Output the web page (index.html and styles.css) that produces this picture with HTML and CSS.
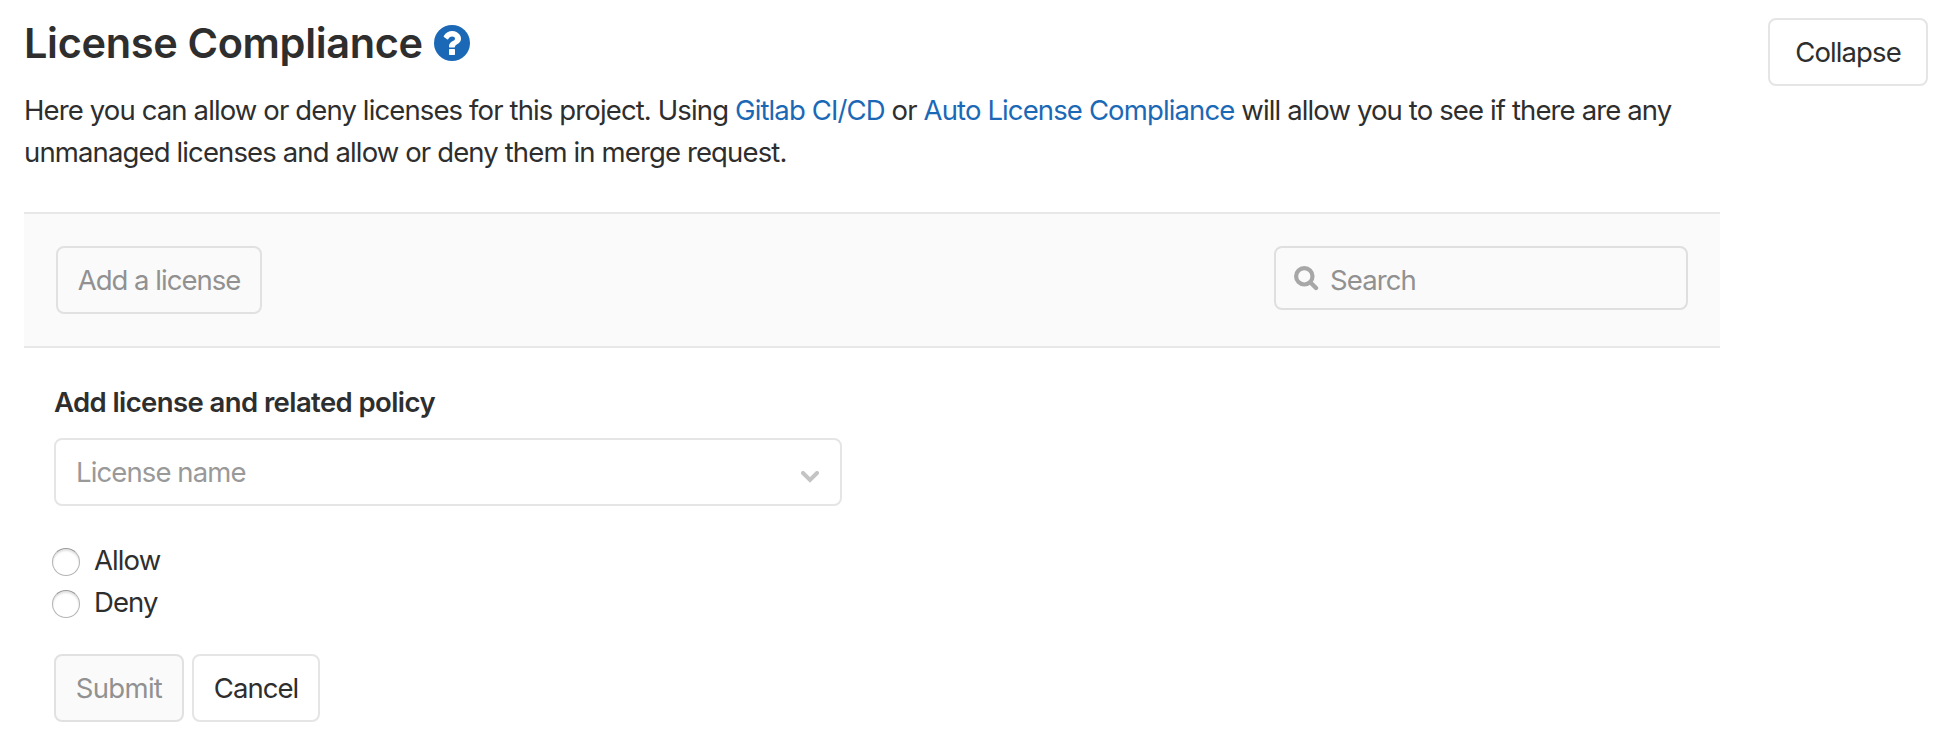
FILE: index.html
```html
<!DOCTYPE html>
<html lang="en">
<head>
<meta charset="utf-8">
<title>License Compliance</title>
<link rel="stylesheet" href="styles.css">
</head>
<body>
<section class="settings">
  <div class="main">
    <h4 class="title"><span class="title-text">License Compliance</span>
      <svg class="help" viewBox="128 128 1536 1536" aria-hidden="true"><circle cx="896" cy="896" r="768" fill="#1b69b6"/><path fill="#fff" d="M1024 1376v-192q0-14-9-23t-23-9h-192q-14 0-23 9t-9 23v192q0 14 9 23t23 9h192q14 0 23-9t9-23zm256-672q0-88-55.5-163t-138.5-116-170.500-41q-243 0-371 213-15 24 8 42l132 100q7 6 19 6 16 0 25-12 53-68 86-92 34-24 86-24 48 0 85.500 26t37.500 59q0 38-20 61t-68 45q-63 28-115.500 86.500t-52.500 125.500v36q0 14 9 23t23 9h192q14 0 23-9t9-23q0-19 21.500-49.500t54.500-49.500q32-18 49-28.500t46-35 44.500-48 28-60.500 12.500-81z"/></svg>
    </h4>
    <p class="intro"><span class="line1">Here you can allow or deny licenses for this project. Using <a class="link">Gitlab CI/CD</a> or <a class="link">Auto License Compliance</a> will allow you to see if there are any</span> <span class="line2">unmanaged licenses and allow or deny them in merge request.</span></p>
    <div class="toolbar">
      <button class="btn btn-add" disabled>Add a license</button>
      <div class="search">
        <svg class="search-icon" viewBox="0 0 26 26" aria-hidden="true"><circle cx="10.300" cy="11.300" r="8.200" fill="none" stroke="#a7a7a7" stroke-width="4.200"/><path d="M16.500 17.500L22 23" stroke="#a7a7a7" stroke-width="4.400" stroke-linecap="round"/></svg>
        <span class="search-text">Search</span>
      </div>
    </div>
    <form class="form">
      <div class="label">Add license and related policy</div>
      <div class="select"><span class="select-text">License name</span>
        <svg class="chevron" viewBox="0 0 18 12" aria-hidden="true"><path d="M2 2L9 9L16 2" fill="none" stroke="#c4c4c4" stroke-width="4" stroke-linecap="round"/></svg>
      </div>
      <div class="radios">
        <label class="option"><span class="radio"></span><span class="option-text">Allow</span></label>
        <label class="option"><span class="radio"></span><span class="option-text">Deny</span></label>
      </div>
      <div class="actions">
        <button type="button" class="btn btn-submit" disabled>Submit</button>
        <button type="button" class="btn btn-cancel">Cancel</button>
      </div>
    </form>
  </div>
  <button class="btn btn-collapse">Collapse</button>
</section>
</body>
</html>
```
FILE: styles.css
```css
* { box-sizing: border-box; }
body {
  margin: 0;
  background: #fff;
  color: #2e2e2e;
  font: 400 27.5px/42px Inter, "Liberation Sans", sans-serif;
  letter-spacing: -0.89px;
}
.settings {
  display: flex;
  justify-content: space-between;
  align-items: flex-start;
  padding: 18px 26px 0 24px;
}
.main { width: 1696px; }
.title {
  display: flex;
  align-items: center;
  gap: 11px;
  height: 50px;
  margin: 0 0 21px;
  font-size: 41.5px;
  font-weight: 630;
  letter-spacing: -0.35px;
}
.title-text { width: 399px; white-space: nowrap; }
.help { width: 36px; height: 36px; }
.intro { margin: 0; white-space: nowrap; letter-spacing: -0.873px; }
.line1, .line2 { display: block; width: max-content; }
.link { color: #1b69b6; }
.toolbar {
  display: flex;
  justify-content: space-between;
  align-items: flex-start;
  height: 136px;
  margin-top: 39px;
  padding: 32px;
  background: #fafafa;
  border: solid #e8e8e8;
  border-width: 2px 0;
}
.btn {
  height: 68px;
  padding: 0;
  border: 2px solid #e5e5e5;
  border-radius: 8px;
  background: #fff;
  color: #2e2e2e;
  font: inherit;
  letter-spacing: inherit;
  white-space: nowrap;
}
.btn:disabled { background: #fafafa; border-color: #e1e1e1; color: #919191; }
.btn-add { width: 206px; letter-spacing: -0.98px; }
.btn-submit { width: 130px; letter-spacing: -0.7px; }
.btn-cancel { width: 128px; letter-spacing: -0.95px; }
.btn-collapse { width: 160px; }
.search {
  display: flex;
  align-items: center;
  width: 414px;
  height: 64px;
  padding-left: 18px;
  border: 2px solid #dfdfdf;
  border-radius: 8px;
  color: #919191;
}
.search-icon { width: 26px; height: 26px; margin-right: 10px; }
.search-text { padding-top: 3px; }
.form { padding: 33px 30px 0; }
.label { font-weight: 630; letter-spacing: -0.59px; }
.select {
  display: flex;
  align-items: center;
  justify-content: space-between;
  width: 788px;
  height: 68px;
  margin-top: 15px;
  padding: 0 21px 0 20px;
  border: 2px solid #e5e5e5;
  border-radius: 8px;
  color: #999;
}
.chevron { width: 18px; height: 12px; margin-top: 9px; }
.radios { margin-top: 34px; }
.option { display: flex; align-items: center; gap: 14px; height: 42px; margin-left: -2px; }
.option-text { padding-bottom: 2px; }
.radio {
  width: 28px;
  height: 28px;
  margin-top: 2px;
  border: 1px solid #b4b4b4;
  border-top-color: #999;
  border-radius: 50%;
  box-shadow: inset 0 2px 2px #e2e2e2;
}
.actions { display: flex; gap: 8px; margin-top: 30px; }
```
